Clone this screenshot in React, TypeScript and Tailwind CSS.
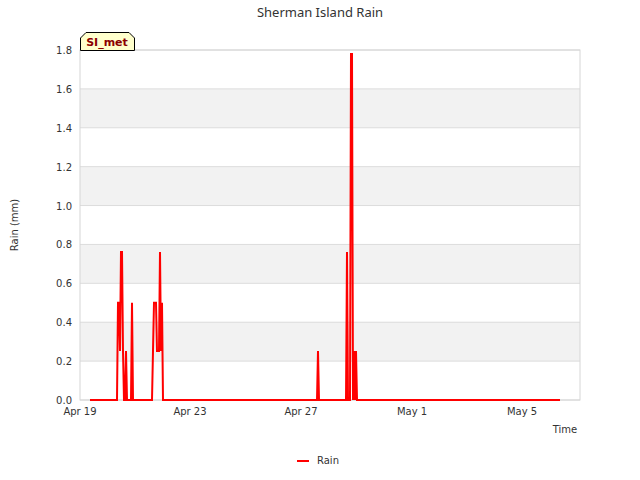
const pts =
  "90,400 117,400 118,302.8 119,302.8 120,351 121,252 122,252 123,351 124,400 125,400 126,351 127,400 131,400 132,302.8 133,400 152,400 153,351 154,302.8 156,302.8 157,351 159,351 160,252 161,351 162,302.8 163,400 317,400 318,351 319,400 346,400 347,252 348,400 350,400 351,54 352,54 353,400 354,351 355,400 356,351 357,400 560,400"

const yTicks = ["0.0", "0.2", "0.4", "0.6", "0.8", "1.0", "1.2", "1.4", "1.6", "1.8"]
const xTicks: [number, string][] = [
  [80, "Apr 19"],
  [190, "Apr 23"],
  [301, "Apr 27"],
  [412, "May 1"],
  [522, "May 5"],
]

export default function App() {
  const step = 350 / 9
  return (
    <div className="relative w-[640px] h-[480px] bg-white font-['DejaVu_Sans',sans-serif] text-[#333]">
      <div className="pt-[3px] text-center text-[13px]">Sherman Island Rain</div>
      <svg className="absolute left-0 top-0" width="640" height="480" fontFamily="DejaVu Sans, sans-serif">
        {[1, 3, 5, 7].map((i) => (
          <rect key={i} x="80" y={400 - (i + 1) * step} width="500" height={step} fill="#f2f2f2" />
        ))}
        {yTicks.map((t, i) => (
          <g key={t}>
            <line x1="80" x2="580" y1={400 - i * step} y2={400 - i * step} stroke="#dcdcdc" />
            <text x="72" y={404 - i * step} fontSize="10" textAnchor="end" fill="#333">{t}</text>
          </g>
        ))}
        <rect x="80" y="50" width="500" height="350" fill="none" stroke="#d6d6d6" />
        {xTicks.map(([x, l]) => (
          <text key={l} x={x} y="415" fontSize="10" textAnchor="middle" fill="#333">{l}</text>
        ))}
        <text x="565" y="433" fontSize="10" textAnchor="middle" fill="#333">Time</text>
        <text x="18" y="225" fontSize="10" textAnchor="middle" fill="#333" transform="rotate(-90 18 225)">Rain (mm)</text>
        <polyline points={pts} fill="none" stroke="#ff0000" strokeWidth="2" strokeLinejoin="miter" />
        <path d="M80.5,50.5 V38 L86,32.5 H129 L134.5,38 V50.5 Z" fill="#ffffcc" stroke="#000" />
        <text x="107" y="46" fontSize="11" fontWeight="bold" textAnchor="middle" fill="#8b0000">SI_met</text>
        <line x1="297" x2="309" y1="461" y2="461" stroke="#ff0000" strokeWidth="2" />
        <text x="317" y="464" fontSize="10" fill="#333">Rain</text>
      </svg>
    </div>
  )
}
